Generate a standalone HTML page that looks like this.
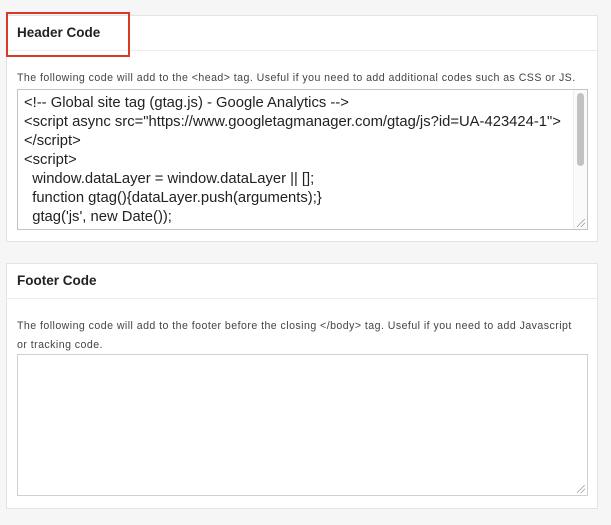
<!DOCTYPE html>
<html><head><style>
body{margin:0;width:611px;height:525px;background:#f6f6f6;font-family:"Liberation Sans",sans-serif;position:relative;overflow:hidden}
.panel{position:absolute;left:6px;width:592px;background:#fff;border:1px solid #e3e3e3;box-sizing:border-box}
.hd{position:absolute;left:0;right:0;top:0;border-bottom:1px solid #ececec}
.title{position:absolute;left:10px;font-size:13.5px;font-weight:bold;color:#222}
.desc{position:absolute;left:10px;font-size:10.6px;letter-spacing:0.45px;color:#444;line-height:19px;width:576px}
.ta{position:absolute;left:10px;width:571px;border:1px solid #d0d0d0;box-sizing:border-box;background:#fff}
.code{position:absolute;left:6px;top:4px;font-size:14.8px;line-height:19px;color:#222;white-space:pre}
.grip{position:absolute;right:2px;bottom:2px;width:8px;height:8px;background:linear-gradient(135deg,transparent 45%,#999 45%,#999 52%,transparent 52%,transparent 70%,#999 70%,#999 77%,transparent 77%)}
</style></head><body>
<div class="panel" style="top:15px;height:227px">
  <div class="hd" style="height:34px"></div>
  <div class="title" style="top:9px">Header Code</div>
  <div class="desc" style="top:53px;white-space:nowrap">The following code will add to the &lt;head&gt; tag. Useful if you need to add additional codes such as CSS or JS.</div>
  <div class="ta" style="top:73px;height:141px;border-color:#bcc6cc;overflow:hidden">
    <div class="code">&lt;!-- Global site tag (gtag.js) - Google Analytics --&gt;
&lt;script async src="https://www.googletagmanager.com/gtag/js?id=UA-423424-1"&gt;
&lt;/script&gt;
&lt;script&gt;
  window.dataLayer = window.dataLayer || [];
  function gtag(){dataLayer.push(arguments);}
  gtag('js', new Date());</div>
    <div style="position:absolute;right:0;top:0;width:13px;height:100%;background:#fafafa;border-left:1px solid #eee"></div>
    <div style="position:absolute;right:3px;top:3px;width:7px;height:73px;border-radius:4px;background:#c2c2c2"></div>
    <div class="grip"></div>
  </div>
</div>
<div style="position:absolute;left:6px;top:12px;width:124px;height:45px;border:2px solid #d83a26;box-sizing:border-box"></div>
<div class="panel" style="top:263px;height:246px">
  <div class="hd" style="height:34px"></div>
  <div class="title" style="top:9px">Footer Code</div>
  <div class="desc" style="top:53px">The following code will add to the footer before the closing &lt;/body&gt; tag. Useful if you need to add Javascript<br>or tracking code.</div>
  <div class="ta" style="top:90px;height:142px"><div class="grip"></div></div>
</div>
</body></html>
